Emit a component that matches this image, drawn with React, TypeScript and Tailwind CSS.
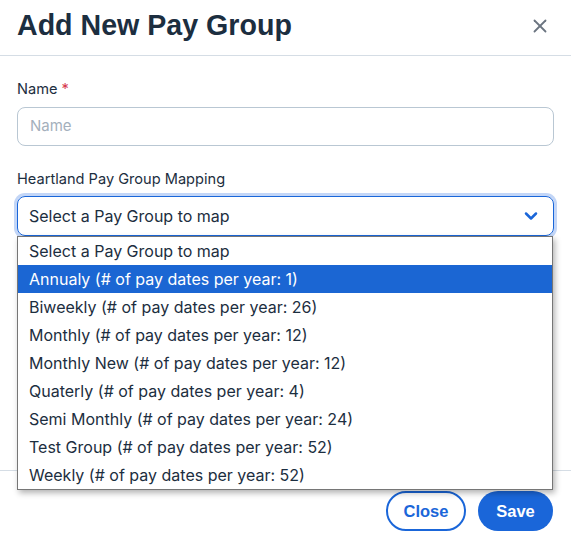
import { X, ChevronDown } from 'lucide-react';

const OPTIONS = [
  'Select a Pay Group to map',
  'Annualy (# of pay dates per year: 1)',
  'Biweekly (# of pay dates per year: 26)',
  'Monthly (# of pay dates per year: 12)',
  'Monthly New (# of pay dates per year: 12)',
  'Quaterly (# of pay dates per year: 4)',
  'Semi Monthly (# of pay dates per year: 24)',
  'Test Group (# of pay dates per year: 52)',
  'Weekly (# of pay dates per year: 52)',
];

const SELECTED = 1;

export default function App() {
  return (
    <div className="h-[536px] w-[571px] overflow-hidden bg-white font-['Inter',sans-serif] text-[#1f2d3d]">
      <div className="flex h-[56px] items-center justify-between border-b border-[#d5dde5] pl-[17px] pr-[20px]">
        <h1 className="-mt-[4px] font-['Liberation_Sans',Arial,sans-serif] text-[28.6px] font-bold leading-none text-[#1c2e40]">
          Add New Pay Group
        </h1>
        <X size={22} strokeWidth={2} className="-mt-[4px] text-[#6b7480]" />
      </div>

      <div className="relative h-[414px] px-[17px] pt-[24px]">
        <label className="block text-[14.6px] leading-[18px] text-[#1c2e40]">
          Name <span className="text-[#d63a4e]">*</span>
        </label>
        <div className="mt-[9px] flex h-[39px] items-center rounded-[8px] border border-[#b9c7d3] px-[12px]">
          <span className="text-[15px] text-[#a4b0bc]">Name</span>
        </div>

        <label className="mt-[24px] block text-[14.6px] leading-[18px] text-[#1c2e40]">
          Heartland Pay Group Mapping
        </label>
        <div className="mt-[8px] flex h-[40px] items-center justify-between rounded-[8px] border border-[#1a66d9] pl-[11px] pr-[12px] shadow-[0_0_0_3px_#c3d6f7]">
          <span className="text-[16px] text-[#1c2e40]">Select a Pay Group to map</span>
          <ChevronDown size={20} strokeWidth={3} className="text-[#1a66d9]" />
        </div>

        <div className="absolute left-[17px] top-[180px] z-10 w-[536px] border border-[#767676] bg-white shadow-[2px_3px_6px_rgba(0,0,0,0.3)]">
          {OPTIONS.map((opt, i) => (
            <div
              key={opt}
              className={
                i === SELECTED
                  ? 'flex h-[28px] items-center bg-[#1b66d3] pl-[11px] text-[16px] text-white'
                  : 'flex h-[28px] items-center pl-[11px] text-[16px] text-[#1c2e40]'
              }
            >
              {opt}
            </div>
          ))}
        </div>
      </div>

      <div className="flex justify-end gap-[12px] border-t border-[#d5dde5] px-[18px] pt-[20px]">
        <button className="h-[40px] w-[80px] rounded-full border-2 border-[#1a66d9] bg-white font-['Liberation_Sans',Arial,sans-serif] text-[16.5px] font-bold text-[#1a66d9]">
          Close
        </button>
        <button className="h-[40px] w-[75px] rounded-full bg-[#1a66d9] font-['Liberation_Sans',Arial,sans-serif] text-[16.5px] font-bold text-white">
          Save
        </button>
      </div>
    </div>
  );
}
